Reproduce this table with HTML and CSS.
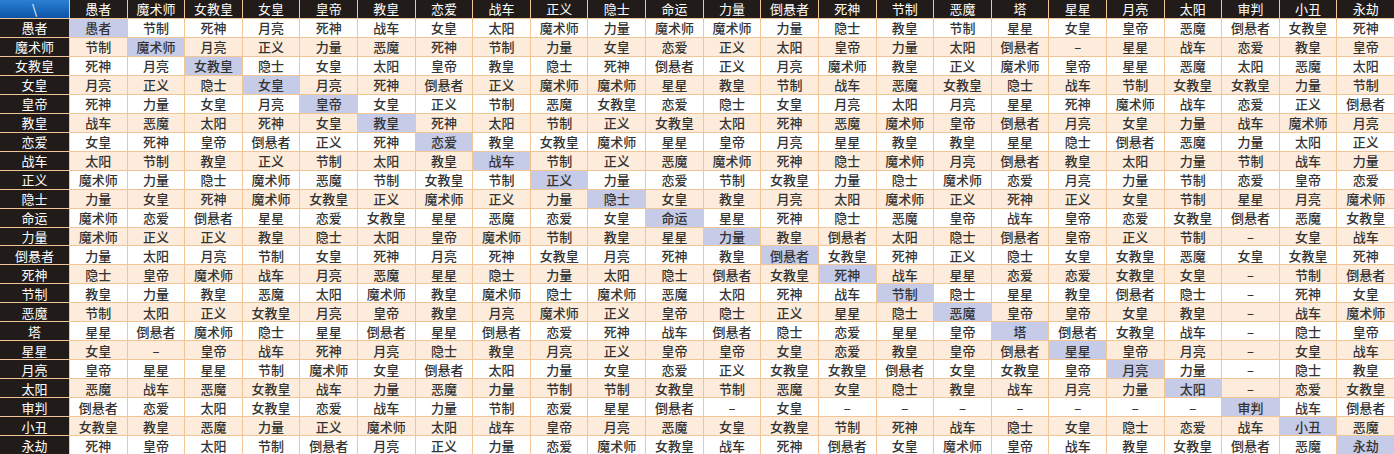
FILE: index.html
```html
<!DOCTYPE html>
<html lang="zh-CN">
<head>
<meta charset="utf-8">
<title>合体表</title>
<link rel="stylesheet" href="styles.css">
</head>
<body>
<div class="grid">
<div class="row head"><span class="corner">\</span><span>愚者</span><span>魔术师</span><span>女教皇</span><span>女皇</span><span>皇帝</span><span>教皇</span><span>恋爱</span><span>战车</span><span>正义</span><span>隐士</span><span>命运</span><span>力量</span><span>倒悬者</span><span>死神</span><span>节制</span><span>恶魔</span><span>塔</span><span>星星</span><span>月亮</span><span>太阳</span><span>审判</span><span>小丑</span><span>永劫</span></div>
<div class="row"><span class="rh">愚者</span><span class="d">愚者</span><span>节制</span><span>死神</span><span>月亮</span><span>死神</span><span>战车</span><span>女皇</span><span>太阳</span><span>魔术师</span><span>力量</span><span>魔术师</span><span>魔术师</span><span>力量</span><span>隐士</span><span>教皇</span><span>节制</span><span>星星</span><span>女皇</span><span>皇帝</span><span>恶魔</span><span>倒悬者</span><span>女教皇</span><span>死神</span></div>
<div class="row alt"><span class="rh">魔术师</span><span>节制</span><span class="d">魔术师</span><span>月亮</span><span>正义</span><span>力量</span><span>恶魔</span><span>死神</span><span>节制</span><span>力量</span><span>女皇</span><span>恋爱</span><span>正义</span><span>太阳</span><span>皇帝</span><span>力量</span><span>太阳</span><span>倒悬者</span><span>–</span><span>星星</span><span>战车</span><span>恋爱</span><span>教皇</span><span>皇帝</span></div>
<div class="row"><span class="rh">女教皇</span><span>死神</span><span>月亮</span><span class="d">女教皇</span><span>隐士</span><span>女皇</span><span>太阳</span><span>皇帝</span><span>教皇</span><span>隐士</span><span>死神</span><span>倒悬者</span><span>正义</span><span>月亮</span><span>魔术师</span><span>教皇</span><span>正义</span><span>魔术师</span><span>皇帝</span><span>星星</span><span>恶魔</span><span>太阳</span><span>恶魔</span><span>太阳</span></div>
<div class="row alt"><span class="rh">女皇</span><span>月亮</span><span>正义</span><span>隐士</span><span class="d">女皇</span><span>月亮</span><span>死神</span><span>倒悬者</span><span>正义</span><span>魔术师</span><span>魔术师</span><span>星星</span><span>教皇</span><span>节制</span><span>战车</span><span>恶魔</span><span>女教皇</span><span>隐士</span><span>战车</span><span>节制</span><span>女教皇</span><span>女教皇</span><span>力量</span><span>节制</span></div>
<div class="row"><span class="rh">皇帝</span><span>死神</span><span>力量</span><span>女皇</span><span>月亮</span><span class="d">皇帝</span><span>女皇</span><span>正义</span><span>节制</span><span>恶魔</span><span>女教皇</span><span>恋爱</span><span>隐士</span><span>女皇</span><span>月亮</span><span>太阳</span><span>月亮</span><span>星星</span><span>死神</span><span>魔术师</span><span>战车</span><span>恋爱</span><span>正义</span><span>倒悬者</span></div>
<div class="row alt"><span class="rh">教皇</span><span>战车</span><span>恶魔</span><span>太阳</span><span>死神</span><span>女皇</span><span class="d">教皇</span><span>死神</span><span>太阳</span><span>节制</span><span>正义</span><span>女教皇</span><span>太阳</span><span>死神</span><span>恶魔</span><span>魔术师</span><span>皇帝</span><span>倒悬者</span><span>月亮</span><span>女皇</span><span>力量</span><span>战车</span><span>魔术师</span><span>月亮</span></div>
<div class="row"><span class="rh">恋爱</span><span>女皇</span><span>死神</span><span>皇帝</span><span>倒悬者</span><span>正义</span><span>死神</span><span class="d">恋爱</span><span>教皇</span><span>女教皇</span><span>魔术师</span><span>星星</span><span>皇帝</span><span>月亮</span><span>星星</span><span>教皇</span><span>教皇</span><span>星星</span><span>隐士</span><span>倒悬者</span><span>恶魔</span><span>力量</span><span>太阳</span><span>正义</span></div>
<div class="row alt"><span class="rh">战车</span><span>太阳</span><span>节制</span><span>教皇</span><span>正义</span><span>节制</span><span>太阳</span><span>教皇</span><span class="d">战车</span><span>节制</span><span>正义</span><span>恶魔</span><span>魔术师</span><span>死神</span><span>隐士</span><span>魔术师</span><span>月亮</span><span>倒悬者</span><span>教皇</span><span>太阳</span><span>力量</span><span>节制</span><span>战车</span><span>力量</span></div>
<div class="row"><span class="rh">正义</span><span>魔术师</span><span>力量</span><span>隐士</span><span>魔术师</span><span>恶魔</span><span>节制</span><span>女教皇</span><span>节制</span><span class="d">正义</span><span>力量</span><span>恋爱</span><span>节制</span><span>女教皇</span><span>力量</span><span>隐士</span><span>魔术师</span><span>恋爱</span><span>月亮</span><span>力量</span><span>节制</span><span>恋爱</span><span>皇帝</span><span>恋爱</span></div>
<div class="row alt"><span class="rh">隐士</span><span>力量</span><span>女皇</span><span>死神</span><span>魔术师</span><span>女教皇</span><span>正义</span><span>魔术师</span><span>正义</span><span>力量</span><span class="d">隐士</span><span>女皇</span><span>教皇</span><span>月亮</span><span>太阳</span><span>魔术师</span><span>正义</span><span>死神</span><span>正义</span><span>女皇</span><span>节制</span><span>星星</span><span>月亮</span><span>魔术师</span></div>
<div class="row"><span class="rh">命运</span><span>魔术师</span><span>恋爱</span><span>倒悬者</span><span>星星</span><span>恋爱</span><span>女教皇</span><span>星星</span><span>恶魔</span><span>恋爱</span><span>女皇</span><span class="d">命运</span><span>星星</span><span>死神</span><span>隐士</span><span>恶魔</span><span>皇帝</span><span>战车</span><span>皇帝</span><span>恋爱</span><span>女教皇</span><span>倒悬者</span><span>恶魔</span><span>女教皇</span></div>
<div class="row alt"><span class="rh">力量</span><span>魔术师</span><span>正义</span><span>正义</span><span>教皇</span><span>隐士</span><span>太阳</span><span>皇帝</span><span>魔术师</span><span>节制</span><span>教皇</span><span>星星</span><span class="d">力量</span><span>教皇</span><span>倒悬者</span><span>太阳</span><span>隐士</span><span>倒悬者</span><span>皇帝</span><span>正义</span><span>节制</span><span>–</span><span>女皇</span><span>战车</span></div>
<div class="row"><span class="rh">倒悬者</span><span>力量</span><span>太阳</span><span>月亮</span><span>节制</span><span>女皇</span><span>死神</span><span>月亮</span><span>死神</span><span>女教皇</span><span>月亮</span><span>死神</span><span>教皇</span><span class="d">倒悬者</span><span>女教皇</span><span>死神</span><span>正义</span><span>隐士</span><span>女皇</span><span>女教皇</span><span>恶魔</span><span>女皇</span><span>女教皇</span><span>死神</span></div>
<div class="row alt"><span class="rh">死神</span><span>隐士</span><span>皇帝</span><span>魔术师</span><span>战车</span><span>月亮</span><span>恶魔</span><span>星星</span><span>隐士</span><span>力量</span><span>太阳</span><span>隐士</span><span>倒悬者</span><span>女教皇</span><span class="d">死神</span><span>战车</span><span>星星</span><span>恋爱</span><span>恋爱</span><span>女教皇</span><span>女皇</span><span>–</span><span>节制</span><span>倒悬者</span></div>
<div class="row"><span class="rh">节制</span><span>教皇</span><span>力量</span><span>教皇</span><span>恶魔</span><span>太阳</span><span>魔术师</span><span>教皇</span><span>魔术师</span><span>隐士</span><span>魔术师</span><span>恶魔</span><span>太阳</span><span>死神</span><span>战车</span><span class="d">节制</span><span>隐士</span><span>星星</span><span>教皇</span><span>倒悬者</span><span>隐士</span><span>–</span><span>死神</span><span>女皇</span></div>
<div class="row alt"><span class="rh">恶魔</span><span>节制</span><span>太阳</span><span>正义</span><span>女教皇</span><span>月亮</span><span>皇帝</span><span>教皇</span><span>月亮</span><span>魔术师</span><span>正义</span><span>皇帝</span><span>隐士</span><span>正义</span><span>星星</span><span>隐士</span><span class="d">恶魔</span><span>皇帝</span><span>皇帝</span><span>女皇</span><span>教皇</span><span>–</span><span>战车</span><span>魔术师</span></div>
<div class="row"><span class="rh">塔</span><span>星星</span><span>倒悬者</span><span>魔术师</span><span>隐士</span><span>星星</span><span>倒悬者</span><span>星星</span><span>倒悬者</span><span>恋爱</span><span>死神</span><span>战车</span><span>倒悬者</span><span>隐士</span><span>恋爱</span><span>星星</span><span>皇帝</span><span class="d">塔</span><span>倒悬者</span><span>女教皇</span><span>战车</span><span>–</span><span>隐士</span><span>皇帝</span></div>
<div class="row alt"><span class="rh">星星</span><span>女皇</span><span>–</span><span>皇帝</span><span>战车</span><span>死神</span><span>月亮</span><span>隐士</span><span>教皇</span><span>月亮</span><span>正义</span><span>皇帝</span><span>皇帝</span><span>女皇</span><span>恋爱</span><span>教皇</span><span>皇帝</span><span>倒悬者</span><span class="d">星星</span><span>皇帝</span><span>月亮</span><span>–</span><span>女皇</span><span>战车</span></div>
<div class="row"><span class="rh">月亮</span><span>皇帝</span><span>星星</span><span>星星</span><span>节制</span><span>魔术师</span><span>女皇</span><span>倒悬者</span><span>太阳</span><span>力量</span><span>女皇</span><span>恋爱</span><span>正义</span><span>女教皇</span><span>女教皇</span><span>倒悬者</span><span>女皇</span><span>女教皇</span><span>皇帝</span><span class="d">月亮</span><span>力量</span><span>–</span><span>隐士</span><span>教皇</span></div>
<div class="row alt"><span class="rh">太阳</span><span>恶魔</span><span>战车</span><span>恶魔</span><span>女教皇</span><span>战车</span><span>力量</span><span>恶魔</span><span>力量</span><span>节制</span><span>节制</span><span>女教皇</span><span>节制</span><span>恶魔</span><span>女皇</span><span>隐士</span><span>教皇</span><span>战车</span><span>月亮</span><span>力量</span><span class="d">太阳</span><span>–</span><span>恋爱</span><span>女教皇</span></div>
<div class="row"><span class="rh">审判</span><span>倒悬者</span><span>恋爱</span><span>太阳</span><span>女教皇</span><span>恋爱</span><span>战车</span><span>力量</span><span>节制</span><span>恋爱</span><span>星星</span><span>倒悬者</span><span>–</span><span>女皇</span><span>–</span><span>–</span><span>–</span><span>–</span><span>–</span><span>–</span><span>–</span><span class="d">审判</span><span>战车</span><span>倒悬者</span></div>
<div class="row alt"><span class="rh">小丑</span><span>女教皇</span><span>教皇</span><span>恶魔</span><span>力量</span><span>正义</span><span>魔术师</span><span>太阳</span><span>战车</span><span>皇帝</span><span>月亮</span><span>恶魔</span><span>女皇</span><span>女教皇</span><span>节制</span><span>死神</span><span>战车</span><span>隐士</span><span>女皇</span><span>隐士</span><span>恋爱</span><span>战车</span><span class="d">小丑</span><span>恶魔</span></div>
<div class="row"><span class="rh">永劫</span><span>死神</span><span>皇帝</span><span>太阳</span><span>节制</span><span>倒悬者</span><span>月亮</span><span>正义</span><span>力量</span><span>恋爱</span><span>魔术师</span><span>女教皇</span><span>战车</span><span>死神</span><span>倒悬者</span><span>女皇</span><span>魔术师</span><span>皇帝</span><span>战车</span><span>教皇</span><span>女教皇</span><span>倒悬者</span><span>恶魔</span><span class="d">永劫</span></div>
</div>
</body>
</html>
```

FILE: styles.css
```css
html, body {
  margin: 0;
  padding: 0;
  background: #ffffff;
}

body {
  font-family: "Noto Sans CJK SC", "Noto Sans", sans-serif;
}

.grid {
  display: grid;
  grid-template-columns: 69px repeat(23, 1fr);
  grid-template-rows: repeat(24, 1fr);
  gap: 1px;
  width: 1394px;
  height: 454px;
  background: #f2c597;
}

.row {
  display: contents;
}

.row span {
  display: flex;
  align-items: center;
  justify-content: center;
  font-size: 13px;
  font-weight: 500;
  line-height: 1;
  white-space: nowrap;
  color: #333333;
  background: #ffffff;
}

.row.alt span {
  background: #fdecdb;
}

.row span.d {
  background: #c6cbe7;
}

.row.head span,
.row span.rh {
  background: #211c19;
  color: #ffffff;
  font-weight: 400;
}

.row.head span.corner {
  background: linear-gradient(#2b7fd4, #0c54a7);
  color: #ffffff;
}
```
